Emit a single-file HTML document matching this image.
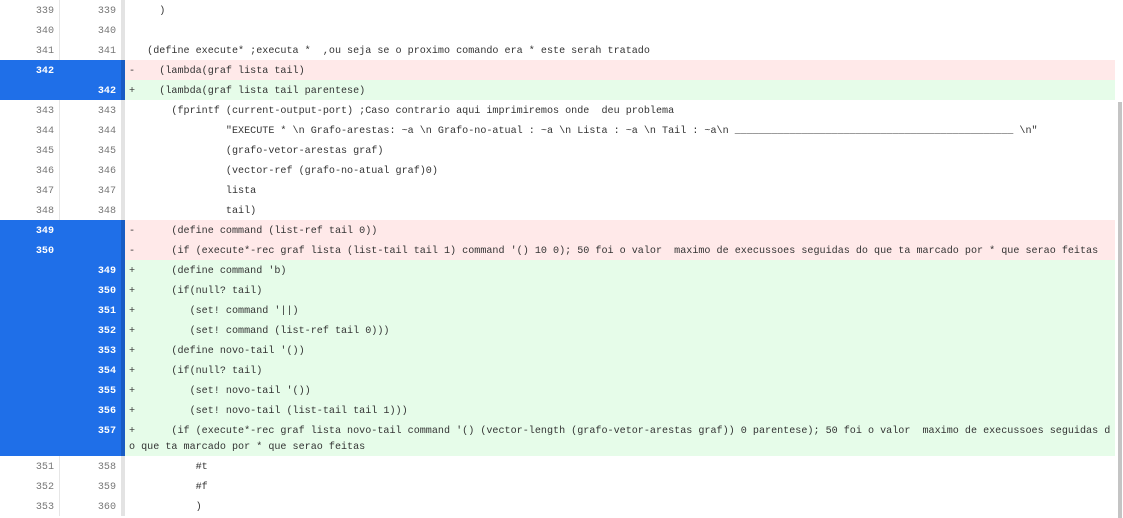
<!DOCTYPE html>
<html><head><meta charset="utf-8"><style>
html,body{margin:0;padding:0;background:#fff;width:1123px;height:518px;overflow:hidden}
.w{position:relative;width:1115px}
.r{display:flex;height:20px;font:10.1px/16px "Liberation Mono",monospace;color:#333;overflow:hidden}
.r.t{height:36px}
.a,.b{width:60px;box-sizing:border-box;text-align:right;padding:4px 5px 0 0;color:#777;background:#fff}
.a{border-right:1px solid #e6e6e6}
.b{width:61px}
.s{width:4px;background:#e3e3e3}
.c{flex:1;white-space:pre;padding:4px 0 0 4px}
.h .a,.h .b{background:#1f6fe8;color:#fff;font-weight:bold;border-color:#1f6fe8}
.h .s{background:#185cc4}
.d .c{background:#ffe9e9}
.p .c{background:#e6fce9}
.sb{position:absolute;left:1118px;top:102px;width:4px;height:416px;background:#c4c4c4}
</style></head><body>
<div class="w">
<div class="r"><div class="a">339</div><div class="b">339</div><div class="s"></div><div class="c">     )</div></div>
<div class="r"><div class="a">340</div><div class="b">340</div><div class="s"></div><div class="c"></div></div>
<div class="r"><div class="a">341</div><div class="b">341</div><div class="s"></div><div class="c">   (define execute* ;executa *  ,ou seja se o proximo comando era * este serah tratado</div></div>
<div class="r h d"><div class="a">342</div><div class="b"></div><div class="s"></div><div class="c">-    (lambda(graf lista tail)</div></div>
<div class="r h p"><div class="a"></div><div class="b">342</div><div class="s"></div><div class="c">+    (lambda(graf lista tail parentese)</div></div>
<div class="r"><div class="a">343</div><div class="b">343</div><div class="s"></div><div class="c">       (fprintf (current-output-port) ;Caso contrario aqui imprimiremos onde  deu problema</div></div>
<div class="r"><div class="a">344</div><div class="b">344</div><div class="s"></div><div class="c">                "EXECUTE * \n Grafo-arestas: ~a \n Grafo-no-atual : ~a \n Lista : ~a \n Tail : ~a\n ______________________________________________ \n"</div></div>
<div class="r"><div class="a">345</div><div class="b">345</div><div class="s"></div><div class="c">                (grafo-vetor-arestas graf)</div></div>
<div class="r"><div class="a">346</div><div class="b">346</div><div class="s"></div><div class="c">                (vector-ref (grafo-no-atual graf)0)</div></div>
<div class="r"><div class="a">347</div><div class="b">347</div><div class="s"></div><div class="c">                lista</div></div>
<div class="r"><div class="a">348</div><div class="b">348</div><div class="s"></div><div class="c">                tail)</div></div>
<div class="r h d"><div class="a">349</div><div class="b"></div><div class="s"></div><div class="c">-      (define command (list-ref tail 0))</div></div>
<div class="r h d"><div class="a">350</div><div class="b"></div><div class="s"></div><div class="c">-      (if (execute*-rec graf lista (list-tail tail 1) command '() 10 0); 50 foi o valor  maximo de execussoes seguidas do que ta marcado por * que serao feitas</div></div>
<div class="r h p"><div class="a"></div><div class="b">349</div><div class="s"></div><div class="c">+      (define command 'b)</div></div>
<div class="r h p"><div class="a"></div><div class="b">350</div><div class="s"></div><div class="c">+      (if(null? tail)</div></div>
<div class="r h p"><div class="a"></div><div class="b">351</div><div class="s"></div><div class="c">+         (set! command '||)</div></div>
<div class="r h p"><div class="a"></div><div class="b">352</div><div class="s"></div><div class="c">+         (set! command (list-ref tail 0)))</div></div>
<div class="r h p"><div class="a"></div><div class="b">353</div><div class="s"></div><div class="c">+      (define novo-tail '())</div></div>
<div class="r h p"><div class="a"></div><div class="b">354</div><div class="s"></div><div class="c">+      (if(null? tail)</div></div>
<div class="r h p"><div class="a"></div><div class="b">355</div><div class="s"></div><div class="c">+         (set! novo-tail '())</div></div>
<div class="r h p"><div class="a"></div><div class="b">356</div><div class="s"></div><div class="c">+         (set! novo-tail (list-tail tail 1)))</div></div>
<div class="r t h p"><div class="a"></div><div class="b">357</div><div class="s"></div><div class="c">+      (if (execute*-rec graf lista novo-tail command '() (vector-length (grafo-vetor-arestas graf)) 0 parentese); 50 foi o valor  maximo de execussoes seguidas d
o que ta marcado por * que serao feitas</div></div>
<div class="r"><div class="a">351</div><div class="b">358</div><div class="s"></div><div class="c">           #t</div></div>
<div class="r"><div class="a">352</div><div class="b">359</div><div class="s"></div><div class="c">           #f</div></div>
<div class="r"><div class="a">353</div><div class="b">360</div><div class="s"></div><div class="c">           )</div></div>
</div>
<div class="sb"></div>
</body></html>
